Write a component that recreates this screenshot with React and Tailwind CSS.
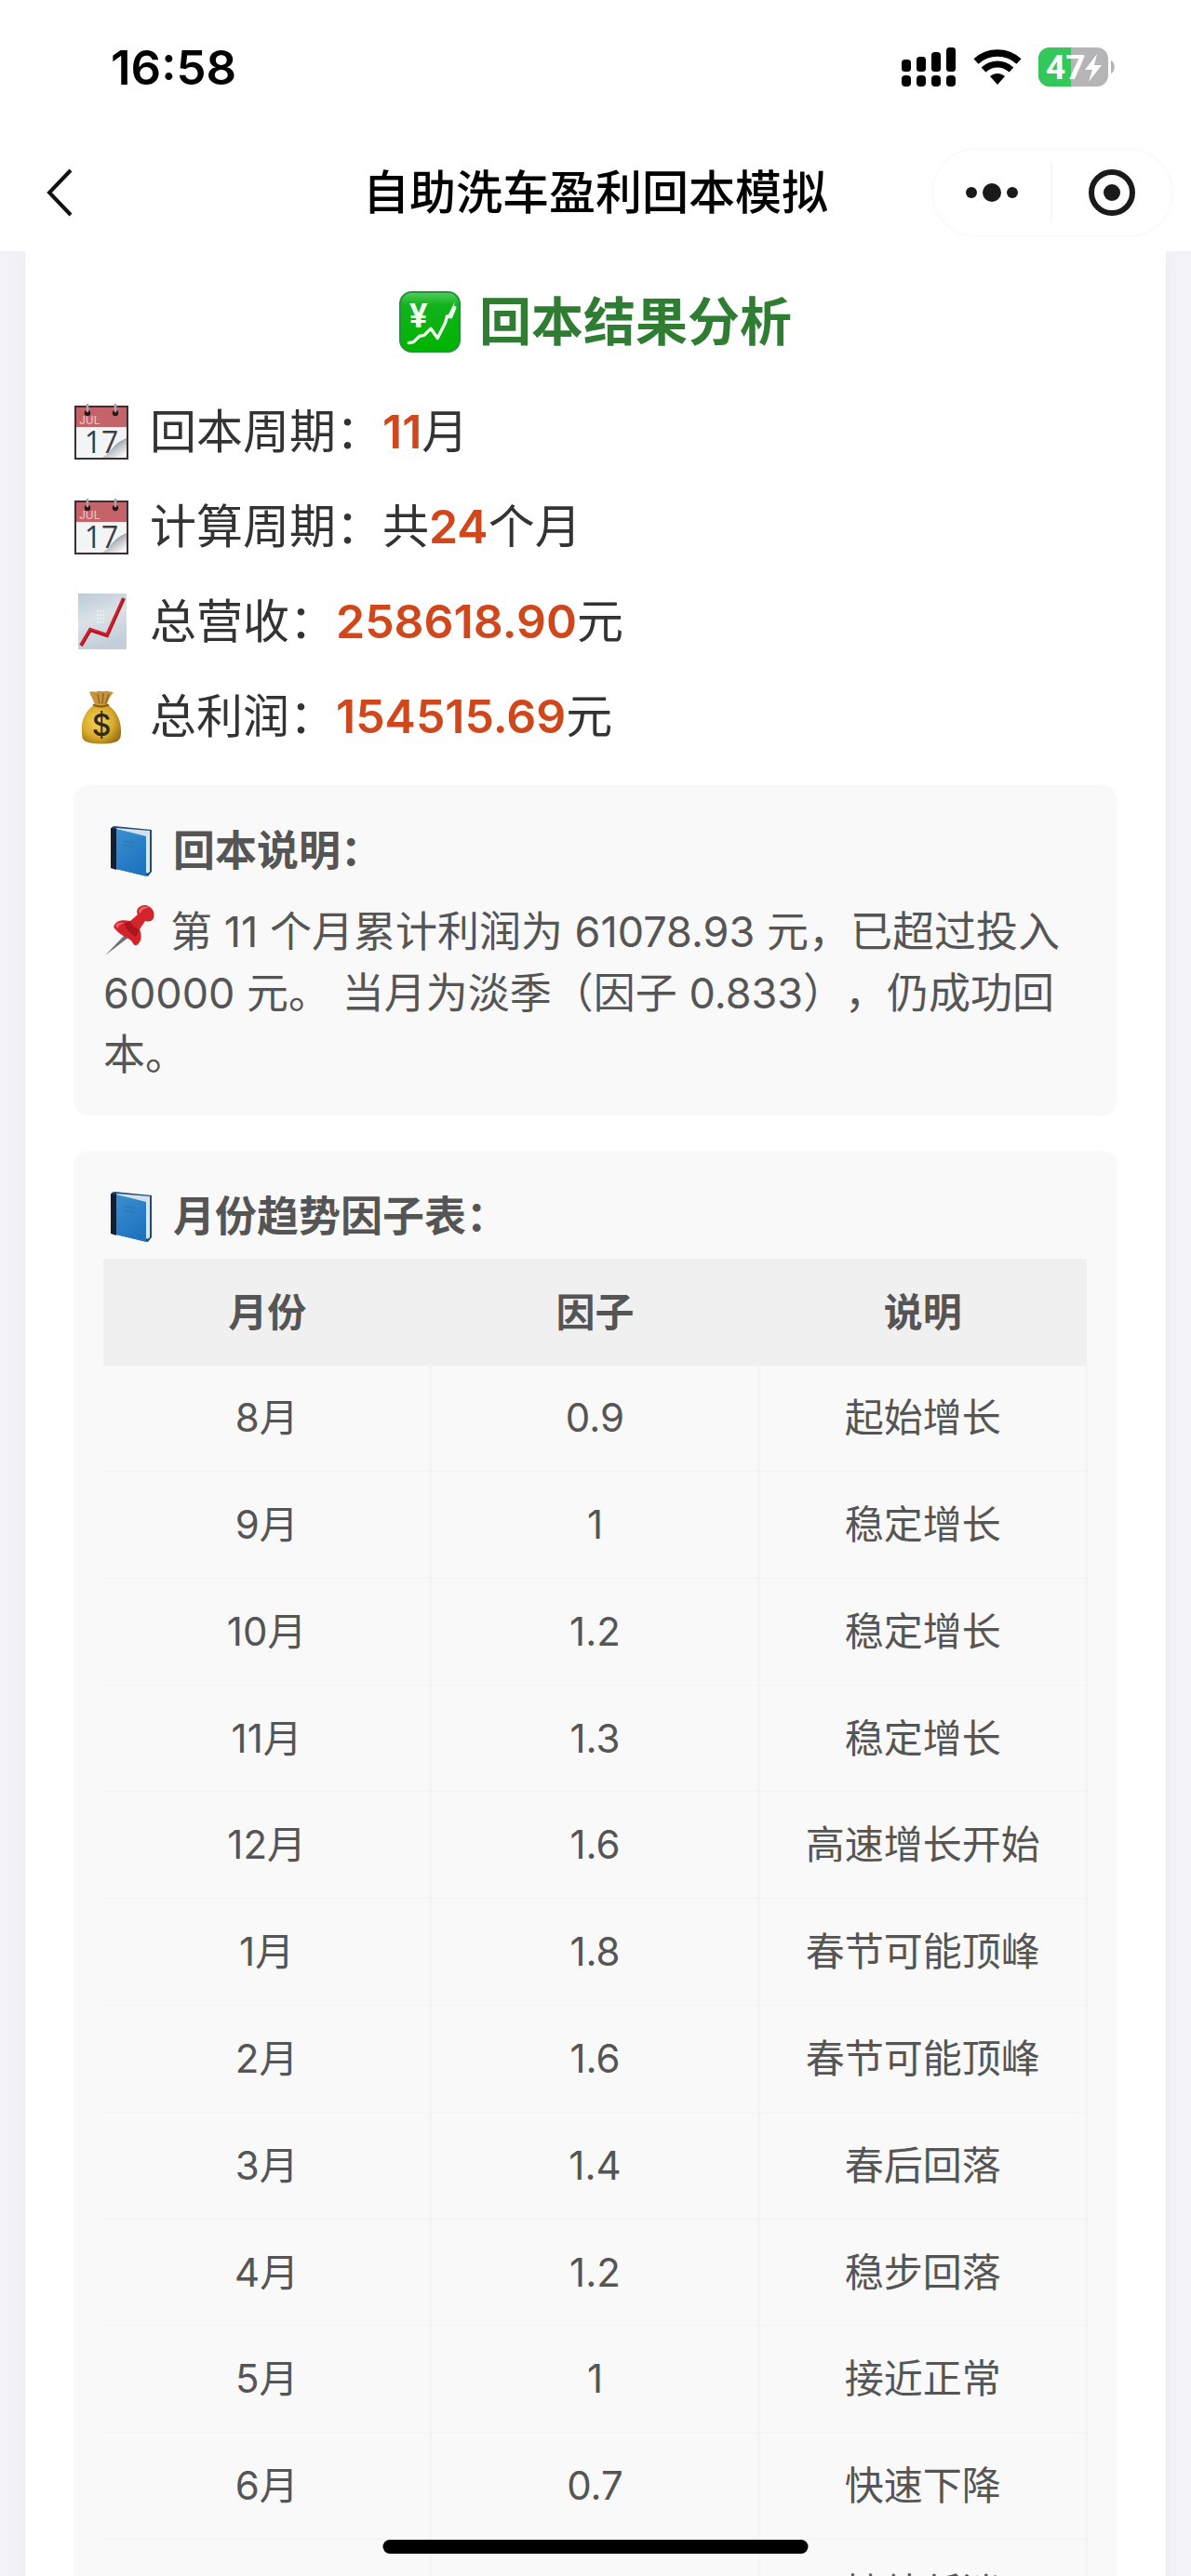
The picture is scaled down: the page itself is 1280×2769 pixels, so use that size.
const STATS = [
  { icon: CalendarEmoji, label: '回本周期：', before: '', value: '11', after: '月' },
  { icon: CalendarEmoji, label: '计算周期：', before: '共', value: '24', after: '个月' },
  { icon: ChartEmoji, label: '总营收：', before: '', value: '258618.90', after: '元' },
  { icon: MoneyBagEmoji, label: '总利润：', before: '', value: '154515.69', after: '元' },
]

const FACTORS = [
  { month: '8月', factor: '0.9', note: '起始增长' },
  { month: '9月', factor: '1', note: '稳定增长' },
  { month: '10月', factor: '1.2', note: '稳定增长' },
  { month: '11月', factor: '1.3', note: '稳定增长' },
  { month: '12月', factor: '1.6', note: '高速增长开始' },
  { month: '1月', factor: '1.8', note: '春节可能顶峰' },
  { month: '2月', factor: '1.6', note: '春节可能顶峰' },
  { month: '3月', factor: '1.4', note: '春后回落' },
  { month: '4月', factor: '1.2', note: '稳步回落' },
  { month: '5月', factor: '1', note: '接近正常' },
  { month: '6月', factor: '0.7', note: '快速下降' },
  { month: '7月', factor: '0.6', note: '持续低迷' },
]

// ─── Emoji ───────────────────────────────────────────────────────────────────
function YenChartEmoji({ className = '' }) {
  return (
    <svg viewBox="0 0 64 64" className={className} aria-hidden="true">
      <defs>
        <linearGradient id="yen-bg" x1="0" y1="0" x2="0" y2="1">
          <stop offset="0" stopColor="#4fd05c" />
          <stop offset="0.22" stopColor="#12b21c" />
          <stop offset="1" stopColor="#00b400" />
        </linearGradient>
      </defs>
      <rect x="1" y="1" width="62" height="62" rx="12" fill="url(#yen-bg)" stroke="#23933a" strokeWidth="2" />
      <text x="20" y="38" textAnchor="middle" fontSize="34" fill="#f4fff4" fontFamily="Inter, sans-serif">¥</text>
      <path d="M10 54l5-1 6-6 5-1 7-7 7 10 8-16 2-7 4 1 4-10" fill="none" stroke="#f4fff4" strokeWidth="3.2" strokeLinecap="round" strokeLinejoin="round" />
      <path d="M58 11l-7 14 4 1z" fill="#f4fff4" />
    </svg>
  )
}

function CalendarEmoji({ className = '' }) {
  return (
    <svg viewBox="0 0 60 62" className={className} aria-hidden="true">
      <defs>
        <linearGradient id="cal-curl" x1="0.3" y1="0.3" x2="0.8" y2="0.9">
          <stop offset="0" stopColor="#6f7377" />
          <stop offset="0.4" stopColor="#b9bcc0" />
          <stop offset="1" stopColor="#f4f4f4" />
        </linearGradient>
      </defs>
      <rect x="2" y="4" width="56" height="56" fill="#f3f4f5" />
      <rect x="2" y="4" width="56" height="22" fill="#c4646a" />
      <text x="6" y="23" fontSize="12" fill="#f0c9cb" fontFamily="Inter, sans-serif">JUL</text>
      <text x="30" y="54" textAnchor="middle" fontSize="32" fontWeight="500" fill="#3b3e43" fontFamily="'Open Sans', sans-serif">17</text>
      <path d="M31 59C40 54 42 44 57 38V59Z" fill="url(#cal-curl)" />
      <rect x="2" y="4" width="56" height="56" fill="none" stroke="#3a3033" strokeWidth="2" />
      <circle cx="15" cy="11" r="3.2" fill="#2b1517" />
      <circle cx="45" cy="11" r="3.2" fill="#2b1517" />
      <path d="M15 2v7M45 2v7" stroke="#a9a5a6" strokeWidth="2.6" strokeLinecap="round" />
    </svg>
  )
}

function ChartEmoji({ className = '' }) {
  return (
    <svg viewBox="0 0 60 62" className={className} aria-hidden="true">
      <defs>
        <linearGradient id="chart-bg" x1="0" y1="0" x2="0.3" y2="1">
          <stop offset="0" stopColor="#bccad6" />
          <stop offset="0.5" stopColor="#dbe2e8" />
          <stop offset="1" stopColor="#c3ced8" />
        </linearGradient>
      </defs>
      <rect x="5" y="1" width="52" height="60" fill="url(#chart-bg)" />
      <path d="M25 20h8M25 24h8M25 28h8M25 32h8" stroke="#eef2f5" strokeWidth="1.4" strokeDasharray="2 1" />
      <path d="M8 57L18 40L36 46L54 6" fill="none" stroke="#b5121f" strokeWidth="4" strokeLinejoin="miter" />
      <path d="M8 56L18 39L36 45L53 6" fill="none" stroke="#dc2632" strokeWidth="1.4" />
    </svg>
  )
}

function MoneyBagEmoji({ className = '' }) {
  return (
    <svg viewBox="0 0 60 62" className={className} aria-hidden="true">
      <defs>
        <radialGradient id="bag-fill" cx="0.42" cy="0.45" r="0.65">
          <stop offset="0" stopColor="#f3d65f" />
          <stop offset="0.6" stopColor="#d9ab2c" />
          <stop offset="1" stopColor="#9a7013" />
        </radialGradient>
      </defs>
      <path d="M23 19C21 13 19 9 17 5c4-2 6 1 9-1 3-1 5 1 8 0 3-1 6 1 9 1-3 4-6 8-7 14z" fill="#c4953a" />
      <path d="M26 7l2 11M32 6l-1 12M38 7l-4 11" stroke="#8a5f1b" strokeWidth="1.3" />
      <path d="M23 18C14 24 8 34 9 46c0 8 0 11 7 13 9 2 20 2 28 0 7-2 7-6 7-13 0-12-6-22-15-28-4-1-9-1-13 0z" fill="url(#bag-fill)" />
      <path d="M22 19c5 2 10 2 15 0" fill="none" stroke="#8b5f16" strokeWidth="2.4" strokeLinecap="round" />
      <text x="30" y="52" textAnchor="middle" fontSize="32" fontWeight="500" fill="#33291a" fontFamily="Inter, sans-serif">$</text>
    </svg>
  )
}

function BookEmoji({ className = '' }) {
  return (
    <svg viewBox="0 0 48 56" className={className} aria-hidden="true">
      <defs>
        <linearGradient id="book-cover" x1="0" y1="0" x2="0.5" y2="1">
          <stop offset="0" stopColor="#3b8fd0" />
          <stop offset="1" stopColor="#1f74c0" />
        </linearGradient>
      </defs>
      <path d="M3 2L6 1L46 5V50L42 55L3 46Z" fill="#1b4c78" />
      <path d="M8 3L44 6V50L41 52Z" fill="#dfe6eb" />
      <path d="M2 3L8 4V48L2 46Z" fill="#101f33" />
      <path d="M8 4L40 11V55L8 47Z" fill="url(#book-cover)" />
      <path d="M9 4L43 7L40 12Z" fill="#cfe0ec" />
      <path d="M16 17l12 2M16 21l12 2" stroke="#2e78b6" strokeWidth="1.6" />
    </svg>
  )
}

function PinEmoji({ className = '' }) {
  return (
    <svg viewBox="0 0 56 56" className={className} aria-hidden="true">
      <path d="M25 31L2 55L28 35Z" fill="#6d7276" />
      <path d="M12 22c4-6 11-5 17-4l8-7c-3-5 2-11 9-10 7 2 10 8 8 14-2 4-6 4-9 3l-6 9c3 7 2 13-3 17-3 1-4-2-6-5-7-5-12-6-17-12-2-2-2-3-1-5z" fill="#d3242b" />
      <path d="M29 18c2 5 5 8 10 9l-4 8c-6-3-10-7-12-14z" fill="#a8151d" />
      <path d="M38 8c1-5 7-7 11-4-5 0-8 2-9 6z" fill="#f0696c" />
      <path d="M13 22c3-3 7-3 10-2-4 1-6 3-8 6z" fill="#ef5b5f" />
    </svg>
  )
}

// ─── Status bar ──────────────────────────────────────────────────────────────
function StatusBar() {
  return (
    <div className="flex h-36 items-center justify-between pl-[119px] pr-[80px]">
      <span className="text-[51px] font-semibold leading-none text-black">16:58</span>
      <div className="flex items-center gap-[18px]">
        <svg viewBox="0 0 59 42" className="h-[42px] w-[59px]" aria-hidden="true">
          <rect x="0" y="13" width="10" height="13" rx="3.5" />
          <rect x="16" y="10" width="10" height="16" rx="3.5" />
          <rect x="32" y="5" width="10" height="21" rx="3.5" />
          <rect x="48" y="0" width="10" height="26" rx="3.5" />
          <rect x="0" y="30" width="10" height="12" rx="4" />
          <rect x="16" y="30" width="10" height="12" rx="4" />
          <rect x="32" y="30" width="10" height="12" rx="4" />
          <rect x="48" y="30" width="10" height="12" rx="4" />
        </svg>
        <svg viewBox="0 0 52 40" className="h-[40px] w-[52px]" aria-hidden="true">
          <path d="M3 14C16 2 36 2 49 14" fill="none" stroke="#000" strokeWidth="7.5" />
          <path d="M11 23C20 15 32 15 41 23" fill="none" stroke="#000" strokeWidth="7" />
          <path d="M18 30C23 26 29 26 34 30L26 39Z" />
        </svg>
        <svg viewBox="0 0 84 42" className="h-[42px] w-[84px]" aria-label="47%">
          <defs>
            <clipPath id="battery-body">
              <rect width="75" height="42" rx="12" />
            </clipPath>
          </defs>
          <g clipPath="url(#battery-body)">
            <rect width="75" height="42" fill="#b5b5b7" />
            <rect width="35" height="42" fill="#34c759" />
          </g>
          <path d="M78 14c5 2 5 12 0 14z" fill="#b5b5b7" />
          <text x="8" y="34" fontSize="37" fontWeight="700" fill="#fff" fontFamily="Roboto, sans-serif">47</text>
          <path d="M63 7L50 24H58L54 37L68 19H60Z" fill="#fff" />
        </svg>
      </div>
    </div>
  )
}

function NavBar() {
  return (
    <div className="grid h-[126px] grid-cols-[1fr_auto_1fr] items-center px-[19px]">
      <button type="button" aria-label="返回" className="justify-self-start pl-[30px] pr-4">
        <svg viewBox="0 0 30 54" className="h-[54px] w-[30px]" fill="none" stroke="#111" strokeWidth="4">
          <path d="M27 3L4 27L27 51" />
        </svg>
      </button>
      <h1 className="text-[50px] font-medium leading-none text-black">自助洗车盈利回本模拟</h1>
      <div className="flex h-24 items-center justify-self-end rounded-full border-2 border-[#fafafa]">
        <button type="button" aria-label="更多" className="flex h-16 w-32 items-center justify-center border-r-2 border-[#f7f7f7]">
          <svg viewBox="0 0 56 20" className="h-5 w-14" fill="#1a1a1a">
            <circle cx="6" cy="10" r="6" />
            <circle cx="28" cy="10" r="10" />
            <circle cx="50" cy="10" r="6" />
          </svg>
        </button>
        <button type="button" aria-label="关闭" className="flex h-16 w-32 items-center justify-center">
          <svg viewBox="0 0 52 52" className="h-[52px] w-[52px]">
            <circle cx="26" cy="26" r="22" fill="none" stroke="#1a1a1a" strokeWidth="6" />
            <circle cx="26" cy="26" r="9" fill="#1a1a1a" />
          </svg>
        </button>
      </div>
    </div>
  )
}

// ─── Content ─────────────────────────────────────────────────────────────────
function StatRow({ icon: Icon, label, before, value, after }) {
  return (
    <li className="flex h-[102px] items-center">
      <Icon className="mr-[22px] h-[62px] w-[60px] shrink-0" />
      <span>
        {label}
        {before}
        <strong className="font-semibold text-[#d0471c]">{value}</strong>
        {after}
      </span>
    </li>
  )
}

function Panel({ title, titleClass = '', className = '', children }) {
  return (
    <section className={`rounded-2xl bg-[#f9f9f9] px-[32px] text-[45px] leading-[66px] text-[#555] ${className}`}>
      <h3 className={`flex items-center font-bold ${titleClass}`}>
        <BookEmoji className="ml-[6px] mr-[21px] h-[56px] w-[48px] shrink-0" />
        {title}
      </h3>
      {children}
    </section>
  )
}

function FactorTable() {
  return (
    <table className="h-[1492px] w-full table-fixed border-collapse text-center text-[42px] leading-none">
      <thead>
        <tr className="h-[115px] bg-[#f0f0f0]">
          <th scope="col" className="font-bold">月份</th>
          <th scope="col" className="font-bold">因子</th>
          <th scope="col" className="font-bold">说明</th>
        </tr>
      </thead>
      <tbody>
        {FACTORS.map(({ month, factor, note }) => (
          <tr key={month}>
            <td className="border-b border-r-2 border-[#f3f3f3]">{month}</td>
            <td className="border-b border-r-2 border-[#f3f3f3]">{factor}</td>
            <td className="border-b border-r-2 border-[#f3f3f3]">{note}</td>
          </tr>
        ))}
      </tbody>
    </table>
  )
}

export default function App() {
  return (
    <div
      lang="zh-CN"
      className="relative flex h-screen flex-col overflow-hidden bg-[#f3f2f8] font-['Inter','Noto_Sans_CJK_SC',sans-serif] [text-spacing-trim:space-all]"
    >
      <header className="shrink-0 bg-white">
        <StatusBar />
        <NavBar />
      </header>

      <main className="min-h-0 flex-1 overflow-y-auto px-[27px] [scrollbar-width:none]">
        <div className="bg-white px-[52px] pb-20 pt-[34px] shadow-[0_0_16px_rgba(0,0,0,0.04)]">
          <h2 className="mb-[25px] flex h-[84px] items-center justify-center gap-[20px] text-[56px] font-bold text-[#2e7d32]">
            <YenChartEmoji className="h-[66px] w-[66px]" />
            回本结果分析
          </h2>

          <ul className="mb-[23px] text-[50px] leading-none text-[#333]">
            {STATS.map((stat) => (
              <StatRow key={stat.label} {...stat} />
            ))}
          </ul>

          <Panel title="回本说明：" titleClass="mb-[21px]" className="mb-[38px] pb-[32px] pt-[38px]">
            <p>
              <PinEmoji className="mr-[16px] inline-block h-[56px] w-[56px] align-[-10px]" />
              第 11 个月累计利润为 61078.93 元，已超过投入 60000 元。 当月为淡季（因子 0.833），仍成功回本。
            </p>
          </Panel>

          <Panel title="月份趋势因子表：" titleClass="mb-[12px]" className="pb-[32px] pt-[38px]">
            <FactorTable />
          </Panel>
        </div>
      </main>

      {/* home indicator */}
      <div className="absolute bottom-6 left-1/2 h-[15px] w-[457px] -translate-x-1/2 rounded-full bg-black" />
    </div>
  )
}
